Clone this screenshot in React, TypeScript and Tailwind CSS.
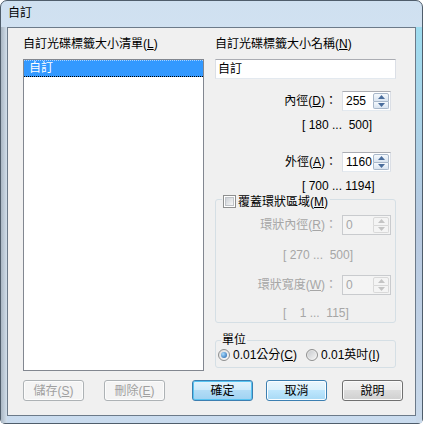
import React from "react";

const U = ({ children }: { children: React.ReactNode }) => (
  <span className="underline decoration-1 underline-offset-[1px]">{children}</span>
);

function Arrow({ up, disabled }: { up?: boolean; disabled?: boolean }) {
  return (
    <svg width="7" height="4" viewBox="0 0 7 4">
      <path d={up ? "M0 4L3.5 0L7 4Z" : "M0 0L3.5 4L7 0Z"} fill={disabled ? "#c4c4c4" : "#4a6d9c"} />
    </svg>
  );
}

function SpinBox({ value, disabled }: { value: string; disabled?: boolean }) {
  const half = disabled
    ? "border-[#d9d9d9] bg-[#f4f4f4]"
    : "border-[#a9b8ca] bg-gradient-to-b from-[#f5f9fd] to-[#d9e4f0]";
  return (
    <div
      className={`ml-[5px] flex h-[20px] w-[49px] border ${
        disabled
          ? "border-[#c9cbce] bg-[#f4f4f4] text-[#a6a6a6]"
          : "border-[#abadb3] border-x-[#dbdfe6] border-b-[#e3e9ef] bg-white text-black"
      }`}
    >
      <div className="flex-1 pl-[3px] leading-[18px]">{value}</div>
      <div className="flex w-[17px] flex-col py-[1px] pr-[1px]">
        <div className={`flex flex-1 items-center justify-center rounded-t-[2px] border ${half}`}>
          <Arrow up disabled={disabled} />
        </div>
        <div className={`flex flex-1 items-center justify-center rounded-b-[2px] border border-t-0 ${half}`}>
          <Arrow disabled={disabled} />
        </div>
      </div>
    </div>
  );
}

function SpinRow({
  label,
  acc,
  value,
  disabled,
  pr,
}: {
  label: string;
  acc: string;
  value: string;
  disabled?: boolean;
  pr: string;
}) {
  return (
    <div className={`flex h-[20px] items-center justify-end ${pr}`}>
      <span className={`leading-[16px] ${disabled ? "text-[#a6a6a6]" : ""}`}>
        {label}(<U>{acc}</U>)：
      </span>
      <SpinBox value={value} disabled={disabled} />
    </div>
  );
}

function Radio({ checked }: { checked?: boolean }) {
  return (
    <div className="flex h-[12px] w-[12px] items-center justify-center rounded-full border border-[#8e8f8f] bg-gradient-to-br from-[#dcdcdc] to-[#fafafa]">
      {checked ? (
        <div className="h-[6px] w-[6px] rounded-full bg-[radial-gradient(circle_at_35%_35%,#a8dcff,#1b5ea8)]" />
      ) : (
        <div className="h-[8px] w-[8px] rounded-full bg-gradient-to-br from-[#c9cccf] to-[#f3f3f3]" />
      )}
    </div>
  );
}

type Kind = "normal" | "default" | "hot" | "disabled";

function Btn({ children, kind, ml }: { children: React.ReactNode; kind: Kind; ml: string }) {
  const styles: Record<Kind, string> = {
    normal:
      "border-[#707070] bg-[linear-gradient(#f2f2f2,#ebebeb_50%,#dddddd_50%,#cfcfcf)] shadow-[inset_0_0_0_1px_#fbfbfb] text-black",
    default:
      "border-[#3c7fb1] bg-[linear-gradient(#e3f3fc,#cdeafb_50%,#b2dcf6_50%,#9fd2f2)] shadow-[inset_0_0_0_1px_#58c4f2] text-black",
    hot:
      "border-[#3c7fb1] bg-[linear-gradient(#eaf6fd,#d9f0fc_50%,#bee6fd_50%,#a7d9f5)] shadow-[inset_0_0_0_1px_#fbfdff] text-black",
    disabled: "border-[#adb2b5] bg-[#f4f4f4] shadow-[inset_0_0_0_1px_#fcfcfc] text-[#a0a0a0]",
  };
  return (
    <div
      className={`flex h-[21px] w-[61px] items-center justify-center rounded-[3px] border leading-[16px] ${ml} ${styles[kind]}`}
    >
      {children}
    </div>
  );
}

export default function App() {
  return (
    <div className="flex h-[424px] w-[423px] flex-col rounded-t-[7px] rounded-b-[5px] border border-[#4f5d6b] bg-gradient-to-b from-[#cfe0f0] via-[#dde9f5] to-[#c9dbee] font-['Liberation_Sans','Noto_Sans_CJK_TC',sans-serif] text-[12px] text-black">
      {/* title bar */}
      <div className="h-[26px] shrink-0 pl-[7px] pt-[4px] leading-[16px]">自訂</div>

      <div className="flex flex-1">
        <div className="w-[6px] bg-gradient-to-r from-[#aab7c4] to-[#d2dfeb]" />

        {/* client area */}
        <div className="mb-[7px] flex w-[409px] flex-col border border-[#6c7a89] bg-[#f0f0f0]">
          <div className="flex gap-[11px] pl-[15px] pt-[8px]">
            {/* left column */}
            <div className="flex w-[181px] flex-col">
              <div className="h-[16px] leading-[16px]">
                自訂光碟標籤大小清單(<U>L</U>)
              </div>
              <div className="mt-[7px] h-[312px] border border-[#828790] bg-white">
                <div className="h-[17px] border-y border-dotted border-t-[#a9d2ff] border-b-black bg-[#3399ff] pl-[5px] leading-[15px] text-white">
                  自訂
                </div>
              </div>
            </div>

            {/* right column */}
            <div className="flex w-[181px] flex-col">
              <div className="h-[16px] leading-[16px]">
                自訂光碟標籤大小名稱(<U>N</U>)
              </div>
              <div className="mt-[7px] h-[20px] border border-[#abadb3] border-x-[#dbdfe6] border-b-[#e3e9ef] bg-white pl-[2px] leading-[18px]">
                自訂
              </div>

              <div className="mt-[12px]">
                <SpinRow label="內徑" acc="D" value="255" pr="pr-[5px]" />
              </div>
              <div className="mt-[6px] h-[16px] whitespace-pre pl-[87px] leading-[16px]">[ 180 ...  500]</div>

              <div className="mt-[19px]">
                <SpinRow label="外徑" acc="A" value="1160" pr="pr-[5px]" />
              </div>
              <div className="mt-[6px] h-[16px] whitespace-pre pl-[87px] leading-[16px]">[ 700 ... 1194]</div>

              <fieldset className="-mt-[3px] rounded-[3px] border border-[#d5dfe5] pb-[1px]">
                <legend className="ml-[6px] flex h-[16px] items-center pl-[1px] pr-[2px] pt-[5px]">
                  <div className="flex h-[13px] w-[13px] items-center justify-center border border-[#8e8f8f] bg-white">
                    <div className="h-[9px] w-[9px] border border-[#c0c4c9] bg-gradient-to-br from-[#cdd1d6] to-[#f7f7f7]" />
                  </div>
                  <span className="ml-[2px] leading-[12px]">
                    覆蓋環狀區域(<U>M</U>)
                  </span>
                </legend>

                <div className="mt-[8px]">
                  <SpinRow label="環狀內徑" acc="R" value="0" disabled pr="pr-[4px]" />
                </div>
                <div className="mt-[12px] h-[16px] whitespace-pre pl-[67px] leading-[16px] text-[#a6a6a6]">
                  [ 270 ...  500]
                </div>
                <div className="mt-[12px]">
                  <SpinRow label="環狀寬度" acc="W" value="0" disabled pr="pr-[4px]" />
                </div>
                <div className="mt-[10px] h-[16px] whitespace-pre pl-[67px] leading-[16px] text-[#a6a6a6]">
                  [    1 ...  115]
                </div>
              </fieldset>

              <fieldset className="mt-[9px] rounded-[3px] border border-[#d5dfe5] pb-[5px]">
                <legend className="ml-[5px] h-[16px] px-[1px] leading-[16px]">單位</legend>
                <div className="flex h-[14px] items-center pl-[2px]">
                  <div className="flex w-[88px] items-center">
                    <Radio checked />
                    <span className="ml-[3px] leading-[14px]">
                      0.01公分(<U>C</U>)
                    </span>
                  </div>
                  <Radio />
                  <span className="ml-[3px] leading-[14px]">
                    0.01英吋(<U>I</U>)
                  </span>
                </div>
              </fieldset>
            </div>
          </div>

          {/* buttons */}
          <div className="mt-[9px] flex pl-[15px]">
            <Btn kind="disabled" ml="">
              儲存(<U>S</U>)
            </Btn>
            <Btn kind="disabled" ml="ml-[20px]">
              刪除(<U>E</U>)
            </Btn>
            <Btn kind="default" ml="ml-[27px]">
              確定
            </Btn>
            <Btn kind="hot" ml="ml-[13px]">
              取消
            </Btn>
            <Btn kind="normal" ml="ml-[15px]">
              說明
            </Btn>
          </div>
        </div>

        <div className="w-[6px] bg-gradient-to-b from-[#9edcef] via-[#b7c9e0] to-[#c9d9ea]" />
      </div>
    </div>
  );
}
